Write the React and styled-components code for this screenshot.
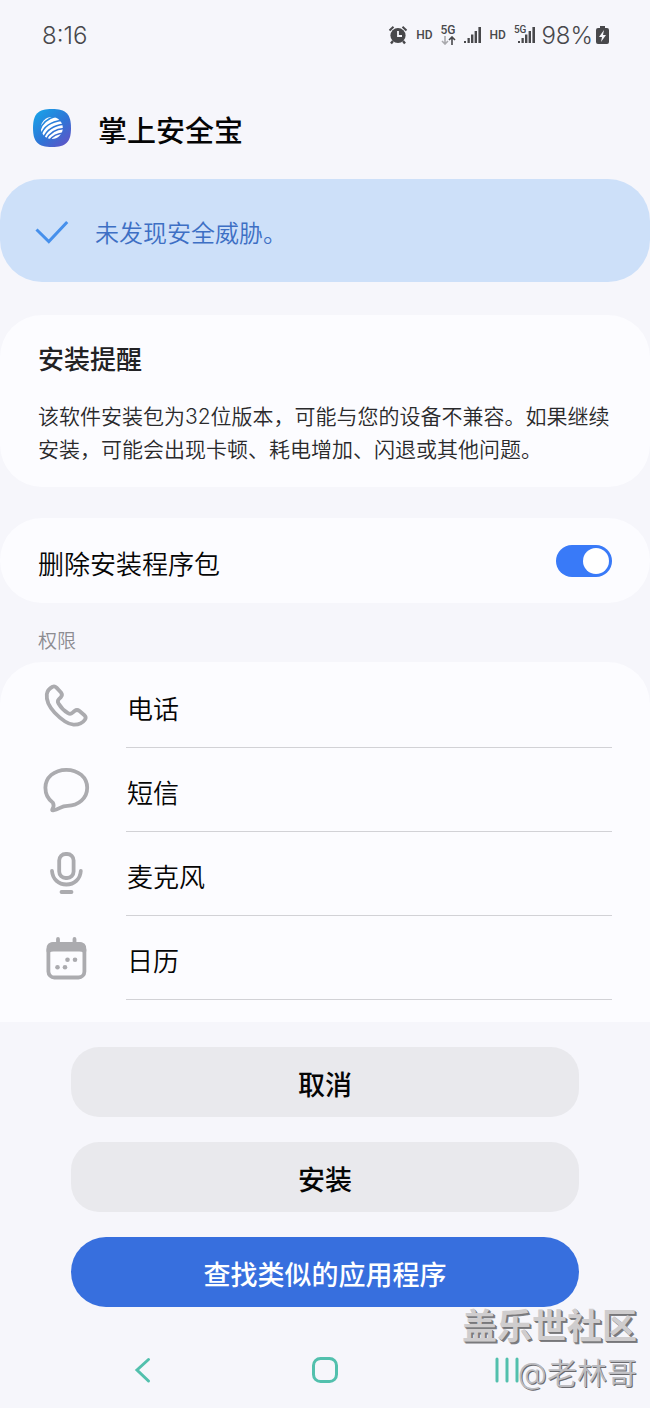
import React, { useState } from 'react';
import styled, { createGlobalStyle } from 'styled-components';

const GlobalStyle = createGlobalStyle`
    * {
        box-sizing: border-box;
    }
    body {
        margin: 0;
        background: #f6f6fb;
        color: #050505;
        font-family: Inter, "Noto Sans CJK SC", sans-serif;
    }
    button {
        font-family: inherit;
    }
`;

const Page = styled.div`
    position: relative;
    display: flex;
    flex-direction: column;
    overflow: hidden;
`;

const StatusBar = styled.header`
    display: flex;
    align-items: center;
    justify-content: space-between;
    height: 70px;
    padding: 0 40px 0 42px;
    color: #48484b;
    font-family: Roboto, sans-serif;
`;

const Clock = styled.time`
    font-family: Inter, sans-serif;
    font-size: 24px;
    font-weight: 300;
`;

const StatusIcons = styled.div`
    display: flex;
    align-items: center;
    gap: 8px;
`;

const Network = styled.span`
    font-size: 12px;
    font-weight: 500;
    line-height: 16px;
`;

const Battery = styled.span`
    display: flex;
    align-items: center;
    gap: 2px;
    margin-left: -3px;
    font-family: Inter, sans-serif;
    font-size: 24px;
    font-weight: 300;
`;

const AppHeader = styled.div`
    display: flex;
    align-items: center;
    gap: 26px;
    height: 109px;
    padding: 7px 32px 0;
`;

const AppName = styled.h1`
    margin: 0;
    padding-top: 7px;
    font-size: 29px;
    font-weight: 500;
    line-height: 40px;
`;

const Banner = styled.div`
    display: flex;
    align-items: center;
    gap: 25px;
    height: 103px;
    padding: 0 34px;
    border-radius: 42px;
    background: #cde0f9;
    color: #3d6fc4;
    font-size: 24px;
    font-weight: 350;
`;

const BannerText = styled.span`
    padding-top: 2px;
`;

const Card = styled.section`
    margin-top: ${({ $gap }) => $gap}px;
    padding: ${({ $padding }) => $padding};
    border-radius: 42px;
    background: #fcfcff;
`;

const CardTitle = styled.h2`
    margin: 0 0 22px;
    color: #222224;
    font-size: 26px;
    font-weight: 500;
    line-height: 36px;
`;

const CardText = styled.p`
    margin: 0;
    color: #2a2a2c;
    font-size: 21px;
    font-weight: 350;
    line-height: 33px;
`;

const ToggleRow = styled.label`
    display: flex;
    align-items: center;
    justify-content: space-between;
    height: 85px;
    font-size: 26px;
    font-weight: 350;
`;

const ToggleText = styled.span`
    padding-top: 3px;
`;

const Toggle = styled.input`
    display: flex;
    align-items: center;
    justify-content: flex-end;
    appearance: none;
    width: 56px;
    height: 32px;
    margin: 0;
    padding: 0 3px;
    border-radius: 16px;
    background: #397af8;
    cursor: pointer;

    &::before {
        content: '';
        width: 26px;
        height: 26px;
        border-radius: 50%;
        background: #fff;
    }

    &:not(:checked) {
        justify-content: flex-start;
        background: #b5b5ba;
    }
`;

const GroupLabel = styled.h3`
    margin: 0;
    padding: 25px 38px 6px;
    color: #8c8c91;
    font-size: 19px;
    font-weight: 350;
    line-height: 28px;
`;

const PermissionList = styled.ul`
    margin: 0;
    padding: 2px 38px 22px;
    border-radius: 42px 42px 0 0;
    background: #fcfcff;
    list-style: none;
`;

const Permission = styled.li`
    display: flex;
    align-items: center;
    gap: 31px;

    svg {
        flex: none;
    }
`;

const PermissionName = styled.span`
    flex: 1;
    height: 84px;
    padding: 8px 1px 0;
    border-bottom: 1px solid #d2d2d6;
    font-size: 26px;
    font-weight: 350;
    line-height: 75px;
`;

const Actions = styled.div`
    display: flex;
    flex-direction: column;
    gap: 25px;
    padding: 25px 71px 0;
`;

const ActionButton = styled.button`
    height: 70px;
    padding: 2px 0 0;
    border: 0;
    border-radius: ${({ $primary }) => ($primary ? '35px' : '28px')};
    background: ${({ $primary }) => ($primary ? '#376fde' : '#e9e9ed')};
    color: ${({ $primary }) => ($primary ? '#fff' : '#050505')};
    font-size: 27px;
    font-weight: 500;
    cursor: pointer;
`;

const NavBar = styled.nav`
    display: flex;
    justify-content: center;
    padding: 37px 0 12px;
`;

const NavButton = styled.button`
    display: flex;
    align-items: center;
    justify-content: center;
    width: 28%;
    height: 52px;
    padding: 0;
    border: 0;
    background: none;
    color: #52c0ad;
`;

const Watermark = styled.div`
    position: absolute;
    right: 13px;
    bottom: 11px;
    color: #cfcdce;
    text-align: right;
    text-shadow: 1px 1px 0 #77777a, 2px 2px 0 #808083;
    pointer-events: none;
`;

const Community = styled.div`
    font-size: 35px;
    font-weight: 700;
    line-height: 46px;
`;

const Author = styled.div`
    color: #bcbcc0;
    font-size: 30px;
    font-weight: 350;
    line-height: 48px;
    text-shadow: 1px 1px 0 #6a6a6e;
`;

const AlarmIcon = () => (
    <svg width="20" height="20" viewBox="0 0 20 20" fill="none">
        <circle cx="10" cy="10.5" r="7.6" fill="#48484b" />
        <path d="M1.5 5.5 5.5 1.8M18.5 5.5 14.5 1.8" stroke="#48484b" strokeWidth="2" />
        <path d="m5 16-2 2.5M15 16l2 2.5" stroke="#48484b" strokeWidth="2.4" />
        <path d="M10 6v5h4" stroke="#f6f6fb" strokeWidth="1.8" />
    </svg>
);

const Signal = () => (
    <svg width="18" height="18" viewBox="0 0 18 18" fill="#48484b">
        <rect x="0" y="15" width="2" height="2" />
        <rect x="3.5" y="12" width="2.3" height="5" />
        <rect x="7" y="8.5" width="2.4" height="8.5" />
        <rect x="10.6" y="5" width="2.4" height="12" />
        <rect x="14.4" y="1" width="2.6" height="16" />
    </svg>
);

const FiveG = styled.span`
    display: flex;
    flex-direction: column;
    align-items: center;
    font-size: 12px;
    font-weight: 500;
    line-height: 11px;
`;

const SmallSignal = styled.span`
    display: flex;
    align-items: flex-start;

    span {
        margin-right: -8px;
        font-size: 10px;
        font-weight: 500;
        line-height: 8px;
    }
`;

const DataArrows = () => (
    <svg width="15" height="9" viewBox="0 0 15 9" fill="none" strokeWidth="1.6">
        <path d="M4 0v8M1 5l3 3 3-3" stroke="#a9a9ad" />
        <path d="M11 9V1M8 4l3-3 3 3" stroke="#48484b" />
    </svg>
);

const BatteryIcon = () => (
    <svg width="15" height="20" viewBox="0 0 15 20">
        <path d="M5 1h5v2h2q2 0 2 2v12q0 2-2 2H3q-2 0-2-2V5q0-2 2-2h2z" fill="#48484b" />
        <path d="M9 5 4 12h3l-1 5 5-7H8z" fill="#f6f6fb" />
    </svg>
);

const AppLogo = () => (
    <svg width="40" height="40" viewBox="0 0 40 40" fill="none">
        <defs>
            <linearGradient id="logoFill" x1="4" y1="3" x2="36" y2="38" gradientUnits="userSpaceOnUse">
                <stop stopColor="#18a2e8" />
                <stop offset="0.55" stopColor="#2f74d6" />
                <stop offset="1" stopColor="#6253c6" />
            </linearGradient>
        </defs>
        <path d="M20 1C34 1 39 6 39 20S34 39 20 39 1 34 1 20 6 1 20 1Z" fill="url(#logoFill)" />
        <circle cx="19.8" cy="20" r="11" fill="#fff" />
        <g stroke="url(#logoFill)" strokeWidth="1.5">
            <path d="M8 22Q11 12 23 8.5" />
            <path d="M9 27Q13 14.5 30 12.3" />
            <path d="M11.5 30Q16 18 32 16.3" />
            <path d="M14 32Q19 21.5 32 20.6" />
            <path d="M17.5 32.5Q22 25.5 32 25" />
        </g>
    </svg>
);

const CheckIcon = () => (
    <svg width="36" height="28" viewBox="0 0 36 28" fill="none">
        <path d="m2.5 12.5 12.3 12L33.2 5" stroke="#4690ec" strokeWidth="3" />
    </svg>
);

const IconBox = ({ children }) => (
    <svg width="57" height="48" viewBox="0 0 57 48" fill="none" stroke="#ababaf" strokeWidth="3.8" strokeLinecap="round" strokeLinejoin="round">
        {children}
    </svg>
);

const PhoneIcon = () => (
    <IconBox>
        <path d="M14.5 4.8Q16.5 3.6 18.5 5.6L23 10.5Q25 13 22.7 15.3L21 17Q19 19 20.5 21.5 24 27.5 30 31.2 32.5 32.6 34.6 30.7L36.5 29Q39 27 41.5 29L46.4 33.2Q48.6 35.3 46.9 37.8 43.3 43 35.5 42.7 27.5 42 16.5 30.5 7.8 21 8.8 12.3 9.6 7.4 14.5 4.8Z" />
    </IconBox>
);

const MessageIcon = () => (
    <IconBox>
        <path d="M28.3 3.8C40.5 3.8 49.2 11.5 49.2 21.8S40.5 39.8 29.5 39.8Q25.5 39.8 22 41.8 18.2 43.9 15 44.4 13.7 44.5 14.4 43.1 16.5 39.5 14.9 36.7 7.4 31.4 7.4 21.8C7.4 11.5 16.1 3.8 28.3 3.8Z" />
    </IconBox>
);

const MicIcon = () => (
    <IconBox>
        <rect x="21.2" y="4" width="14.4" height="24" rx="6.5" />
        <path d="M14 21C14.5 29 20.5 34.5 28.4 34.5S42.3 29 42.8 21M23.5 42h10" />
    </IconBox>
);

const CalendarIcon = () => (
    <IconBox>
        <path d="M20 5v6M36.5 5v6" />
        <rect x="10.4" y="10" width="36" height="33.5" rx="6" />
        <path d="M10.4 17V15q0-5 5-5h26q5 0 5 5v2q-2-1.5-5-1.5h-26q-3 0-5 1.5Z" fill="#ababaf" />
        <g fill="#ababaf" stroke="none">
            <circle cx="29.5" cy="25.8" r="2.3" />
            <circle cx="37" cy="25.8" r="2.3" />
            <circle cx="19.5" cy="33.3" r="2.3" />
            <circle cx="27" cy="33.3" r="2.3" />
        </g>
    </IconBox>
);

const permissions = [
    { name: '电话', Icon: PhoneIcon },
    { name: '短信', Icon: MessageIcon },
    { name: '麦克风', Icon: MicIcon },
    { name: '日历', Icon: CalendarIcon },
];

function App() {
    const [deletePackage, setDeletePackage] = useState(true);

    return (
        <Page>
            <GlobalStyle />
            <StatusBar>
                <Clock>8:16</Clock>
                <StatusIcons>
                    <AlarmIcon />
                    <Network>HD</Network>
                    <FiveG>5G<DataArrows /></FiveG>
                    <Signal />
                    <Network>HD</Network>
                    <SmallSignal><span>5G</span><Signal /></SmallSignal>
                    <Battery>98%<BatteryIcon /></Battery>
                </StatusIcons>
            </StatusBar>
            <AppHeader>
                <AppLogo />
                <AppName>掌上安全宝</AppName>
            </AppHeader>
            <Banner>
                <CheckIcon />
                <BannerText>未发现安全威胁。</BannerText>
            </Banner>
            <Card $gap={33} $padding="27px 38px 21px">
                <CardTitle>安装提醒</CardTitle>
                <CardText>该软件安装包为32位版本，可能与您的设备不兼容。如果继续安装，可能会出现卡顿、耗电增加、闪退或其他问题。</CardText>
            </Card>
            <Card $gap={31} $padding="0 38px">
                <ToggleRow>
                    <ToggleText>删除安装程序包</ToggleText>
                    <Toggle type="checkbox" checked={deletePackage} onChange={(e) => setDeletePackage(e.target.checked)} />
                </ToggleRow>
            </Card>
            <GroupLabel>权限</GroupLabel>
            <PermissionList>
                {permissions.map(({ name, Icon }) => (
                    <Permission key={name}>
                        <Icon />
                        <PermissionName>{name}</PermissionName>
                    </Permission>
                ))}
            </PermissionList>
            <Actions>
                <ActionButton>取消</ActionButton>
                <ActionButton>安装</ActionButton>
                <ActionButton $primary>查找类似的应用程序</ActionButton>
            </Actions>
            <NavBar>
                <NavButton aria-label="返回">
                    <svg width="28" height="28" viewBox="0 0 28 28" fill="none" stroke="currentColor" strokeWidth="3" strokeLinecap="round">
                        <path d="M19.5 3.5 8 14l11.5 11" />
                    </svg>
                </NavButton>
                <NavButton aria-label="主页">
                    <svg width="28" height="28" viewBox="0 0 28 28" fill="none" stroke="currentColor" strokeWidth="3">
                        <rect x="2.5" y="2.5" width="23" height="23" rx="7" />
                    </svg>
                </NavButton>
                <NavButton aria-label="最近任务">
                    <svg width="28" height="28" viewBox="0 0 28 28" fill="none" stroke="currentColor" strokeWidth="3" strokeLinecap="round">
                        <path d="M4 3v22M14 3v22M24 3v22" />
                    </svg>
                </NavButton>
            </NavBar>
            <Watermark>
                <Community>盖乐世社区</Community>
                <Author>@老林哥</Author>
            </Watermark>
        </Page>
    );
}

export default App;
